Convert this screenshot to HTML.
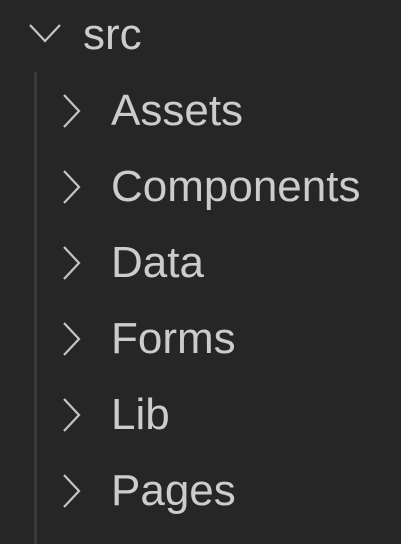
<!DOCTYPE html>
<html><head><style>
body{margin:0;width:401px;height:544px;background:#262626;overflow:hidden;position:relative;font-family:"Liberation Sans",Arial,sans-serif;color:#cccccc}
.t{position:absolute;font-size:44px;line-height:44px;white-space:nowrap}
.g{position:absolute;left:34px;top:72px;width:3px;height:472px;background:#3b3b3b}
svg{position:absolute}
</style></head><body>
<svg style="left:28px;top:22px" width="36" height="24"><path d="M2 3 L17 19 L32 3" fill="none" stroke="#c5c5c5" stroke-width="2.2"/></svg>
<div class="t" style="left:83px;top:13px">src</div>
<div class="g"></div>
<svg style="left:60px;top:93px" width="24" height="38"><path d="M4 2 L19 18 L4 34" fill="none" stroke="#c5c5c5" stroke-width="2.2"/></svg>
<div class="t" style="left:111px;top:89px">Assets</div>
<svg style="left:60px;top:169px" width="24" height="38"><path d="M4 2 L19 18 L4 34" fill="none" stroke="#c5c5c5" stroke-width="2.2"/></svg>
<div class="t" style="left:111px;top:165px">Components</div>
<svg style="left:60px;top:245px" width="24" height="38"><path d="M4 2 L19 18 L4 34" fill="none" stroke="#c5c5c5" stroke-width="2.2"/></svg>
<div class="t" style="left:111px;top:241px">Data</div>
<svg style="left:60px;top:321px" width="24" height="38"><path d="M4 2 L19 18 L4 34" fill="none" stroke="#c5c5c5" stroke-width="2.2"/></svg>
<div class="t" style="left:111px;top:317px">Forms</div>
<svg style="left:60px;top:397px" width="24" height="38"><path d="M4 2 L19 18 L4 34" fill="none" stroke="#c5c5c5" stroke-width="2.2"/></svg>
<div class="t" style="left:111px;top:393px">Lib</div>
<svg style="left:60px;top:473px" width="24" height="38"><path d="M4 2 L19 18 L4 34" fill="none" stroke="#c5c5c5" stroke-width="2.2"/></svg>
<div class="t" style="left:111px;top:469px">Pages</div>
</body></html>
